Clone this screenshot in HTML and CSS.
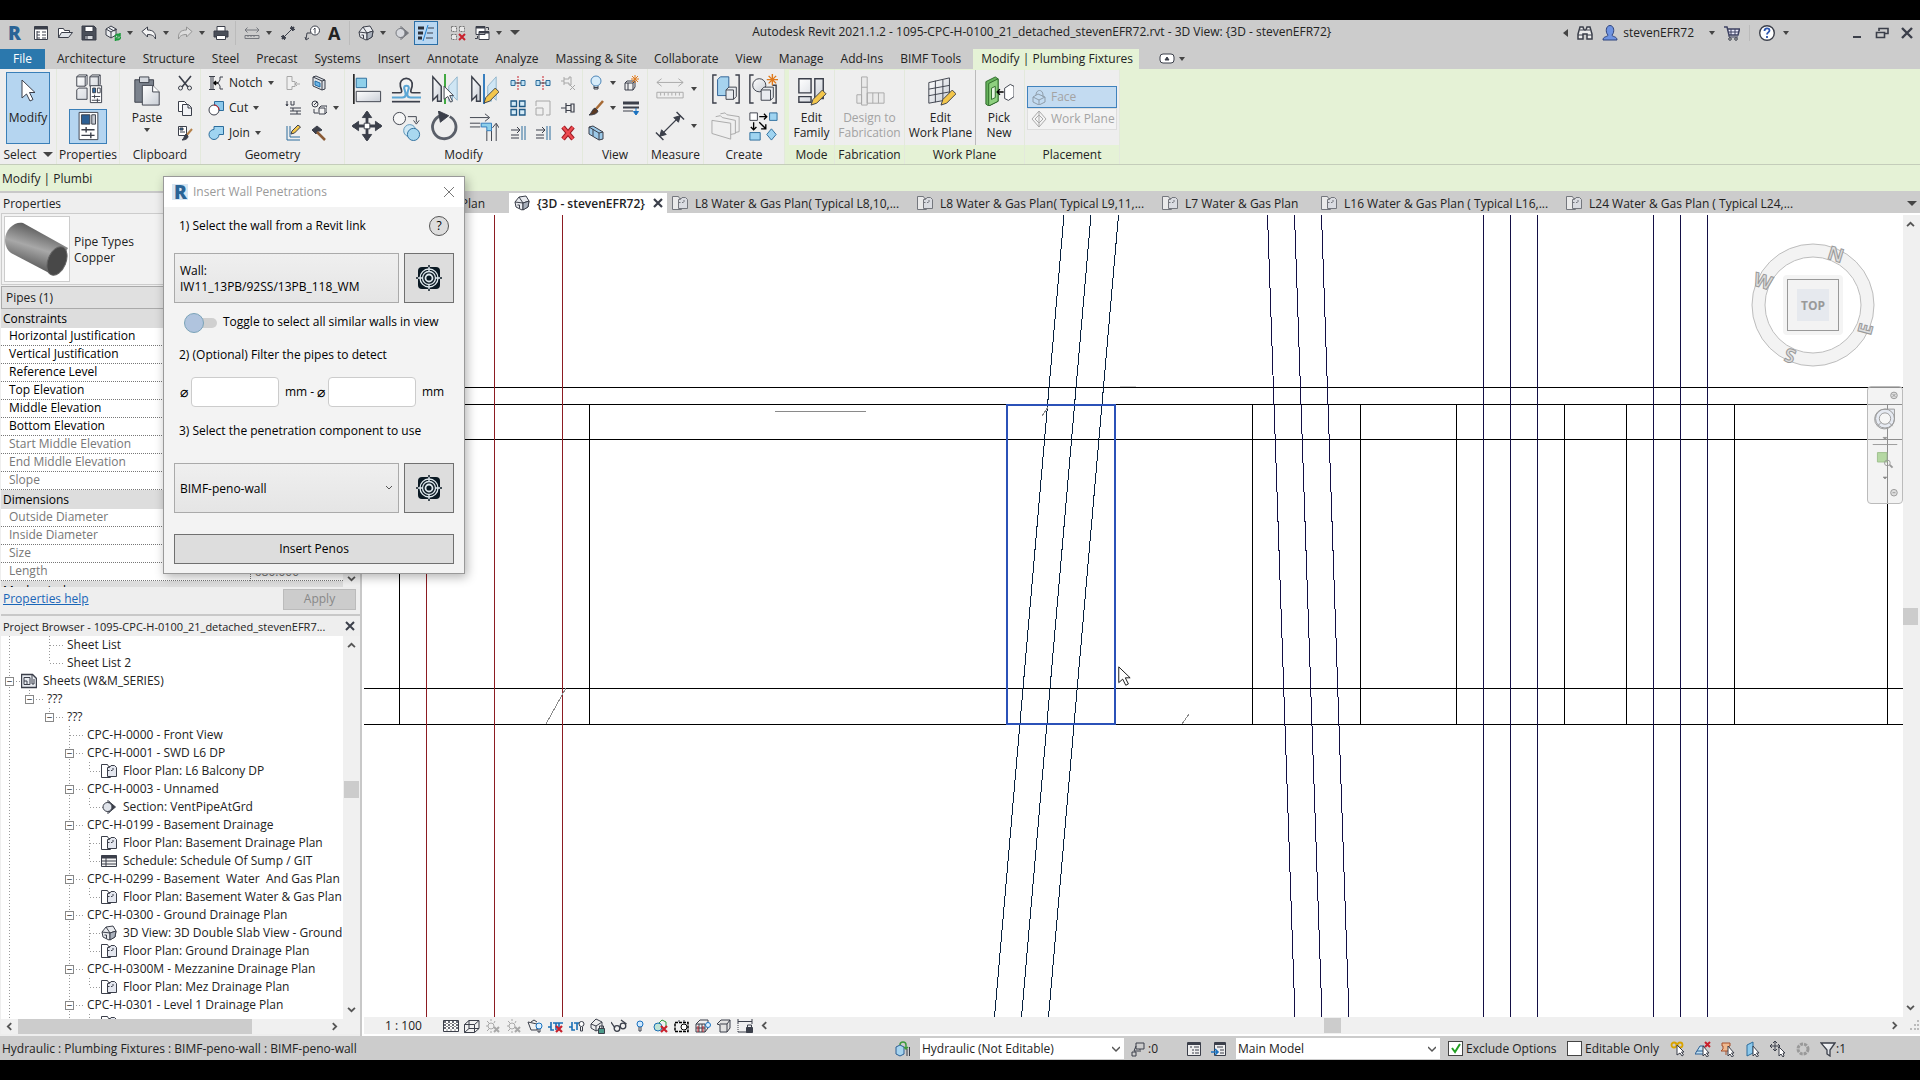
FILE: index.html
```html
<!DOCTYPE html>
<html lang="en">
<head>
  <meta charset="UTF-8">
  <meta name="viewport" content="width=device-width, initial-scale=1.0">
  <title>Autodesk Revit 2021.1.2</title>
  <link rel="stylesheet" href="styles.css">
</head>
<body>
  <!-- Icon sprite -->
  <svg class="sprite" aria-hidden="true">
    <defs>
      <linearGradient id="pipe-side" x1="0.3" y1="0" x2="0" y2="0.8">
        <stop offset="0" stop-color="#5c5c5c"/>
        <stop offset="0.45" stop-color="#a8a8a8"/>
        <stop offset="1" stop-color="#4a4a4a"/>
      </linearGradient>
      <linearGradient id="soft" x1="0" y1="0" x2="1" y2="1">
        <stop offset="0" stop-color="#fff"/>
        <stop offset="1" stop-color="#c9ced6"/>
      </linearGradient>
    </defs>
    <symbol id="logo" viewBox="0 0 16 16"><text x="2" y="15" font-family="Open Sans" font-weight="800" font-size="19" fill="#2a6496" stroke="none">R</text></symbol>
    <symbol id="panel" viewBox="0 0 16 16"><path d="M1.5 1.5h13v13h-13z" fill="#fff"/><path d="M1.5 3h13" stroke-width="3"/><path d="M4 6v8M4 7h3M4 10h3M4 13h3M9 7h4M9 10h4M9 13h4"/></symbol>
    <symbol id="open" viewBox="0 0 16 16"><path d="M1.5 12.5v-9h5l1 2h5v2" fill="#fff"/><path d="M1.5 12.5l3-5h11l-4 5z" fill="#dfe3e8"/></symbol>
    <symbol id="save" viewBox="0 0 16 16"><path d="M1 1h12l2 2v12H1z" fill="#4a4f59"/><path d="M4 1.5h8v5H4z" fill="#fff"/><path d="M4 10.5h8v4H4z" fill="#d7dade"/><path d="M6 11v3"/></symbol>
    <symbol id="sync" viewBox="0 0 16 16"><path d="M1 4l5-3 5 3v6l-5 3-5-3z" fill="#e9ebee"/><path d="M1 4l5 3 5-3M6 7v6M4 3l5 3 3-2" /><path d="M10 12a3 3 0 0 1 5-2m0-2v3h-3M15.5 12a3 3 0 0 1-5 2m0 2v-3h3" stroke="#1c9a3c" stroke-width="1.5"/></symbol>
    <symbol id="undo" viewBox="0 0 16 16"><path d="M1 6.5L6.5 2v3c6 0 8.5 3 8 9-1.5-3.5-4-4.5-8-4.5v2.5z" fill="#f4f4f4"/></symbol>
    <symbol id="print" viewBox="0 0 16 16"><path d="M4 6V1.5h8V6" fill="#fff"/><path d="M1 6h14v6H1z" fill="#4a4f59"/><path d="M3.5 10.5h9v4h-9z" fill="#fff"/></symbol>
    <symbol id="ruler" viewBox="0 0 16 16"><path d="M1 5h14M3.5 2.5L1 5l2.5 2.5M12.5 2.5L15 5l-2.5 2.5M1 10.5h14v3H1zM4 10.5v1.5M7 10.5v1.5M10 10.5v1.5"/></symbol>
    <symbol id="dim" viewBox="0 0 16 16"><path d="M3 13L13 3M1 11l4 4M11 1l4 4"/><path d="M2 14l1-4 3 3zM14 2l-1 4-3-3z" fill="#3b3f4a"/></symbol>
    <symbol id="tag" viewBox="0 0 16 16"><circle cx="11" cy="5.5" r="4.5" fill="#fff"/><path d="M9.5 4.5l1.5-1.500v5.500"/><path d="M7 8H3l-1 6M1 12l1 3 3-2"/></symbol>
    <symbol id="house" viewBox="0 0 16 16"><path d="M1 7l4-5 7-1 3 5-1 6-6 3-6-3z" fill="#e8eaee"/><path d="M5 2l4 6v7M1 7l8 1 6-2" /><path d="M9 8l6-2-1 6-5 3z" fill="#a9b0bb"/><path d="M3.5 10h2v3.5" /></symbol>
    <symbol id="section" viewBox="0 0 16 16"><path d="M8 2.500l6.500 5.500L8 13.500z" fill="#3b3f4a"/><circle cx="6.500" cy="8" r="4.500" fill="#dfe3ea"/><path d="M7 1v3M7 12v3"/></symbol>
    <symbol id="thin" viewBox="0 0 16 16"><path d="M0 3h6M0 8h5M0 13h4" stroke="#2b2f38" stroke-width="3"/><path d="M10 3h6M9 8h6M8 13h7" stroke="#3b3f4a"/><path d="M10 0L5 16" stroke="#1d7fd1"/></symbol>
    <symbol id="hidden" viewBox="0 0 16 16"><path d="M1.5 1.5h5v5h-5zM9.5 1.5h5v5h-5zM1.5 9.5h5v5h-5z" fill="#e8e8e8" stroke="#777" stroke-dasharray="2 1"/><path d="M9 9l6 6M15 9l-6 6" stroke="#c8202c" stroke-width="2"/></symbol>
    <symbol id="windows" viewBox="0 0 16 16"><path d="M2 1.5h9v8H2zM5 6.5h10v8H5z" fill="#fff"/><path d="M2 2.5h9M5 7.5h10" stroke-width="2"/><path d="M12 2.5h2.5V5M3.5 11v2.5H1"/></symbol>
    <symbol id="binoc" viewBox="0 0 16 16"><path d="M1 14V9l2-7h3l1 3h2l1-3h3l2 7v5h-5V9H6v5z" fill="#eee" stroke-width="1.5"/><path d="M1 10h5M10 10h5M3 5h3M10 5h3"/></symbol>
    <symbol id="user" viewBox="0 0 16 16"><path d="M1 15c0-4 5-3 5-5-3-3-2-9.5 2-9.5s5 6.5 2 9.5c0 2 5 1 5 5z" fill="#6f93e0" stroke="#2d427c"/></symbol>
    <symbol id="cart" viewBox="0 0 16 16"><path d="M0 2h3l2 8h9l1.5-6H4" fill="#eef" stroke="#3c4060" stroke-width="1.5"/><path d="M5 7h10M7 4v6M11 4v6M5 10v2h9" stroke="#3c4060"/><circle cx="6" cy="14" r="1.3"/><circle cx="12" cy="14" r="1.3"/></symbol>
    <symbol id="help" viewBox="0 0 16 16"><circle cx="8" cy="8" r="7.3" fill="#fff" stroke-width="1.4"/><path d="M5.500 6c0-3.500 5-3.500 5-.5 0 2-2.500 1.800-2.500 4M8 11v2" stroke="#2c56b0" stroke-width="1.800"/></symbol>

    <symbol id="arrow" viewBox="0 0 16 24"><path d="M2 1v18l4.5-4 3.5 7 3-1.5-3.5-7H15z" fill="#fff"/></symbol>
    <symbol id="types" viewBox="0 0 32 32"><path d="M4 3l2-2h9v10l-2 2H4zM18 3l2-2h9v10l-2 2h-9zM4 17l2-2h9v12H4z" fill="url(#soft)"/><path d="M4 3h9v10M13 3l2-2M18 3h9v10M27 3l2-2"/><path d="M18.5 12.5h12v18h-12z" fill="#fff"/><path d="M21 15h3v5h-3z" fill="#2f6fa8"/><path d="M26 15h3v5h-3zM20 24h9M20 28h9M23 22v4M26 26v4"/></symbol>
    <symbol id="props" viewBox="0 0 32 32"><path d="M6.5 1.5h20v29h-20z" fill="#fff"/><path d="M9 4h9v10H9z" fill="#2c5f94"/><path d="M20 4h4v10h-4z" fill="#c5cad2"/><path d="M9 20h14M9 26h14M14 17v6M19 23v6" stroke-width="1.5"/></symbol>
    <symbol id="paste" viewBox="0 0 32 32"><path d="M3 4h20v24H3z" fill="#7b828d"/><path d="M8 1h10v6H8z" fill="#d4d8de"/><path d="M11 10h11l7 7v14H11z" fill="url(#soft)"/><path d="M22 10v7h7" fill="#fff"/></symbol>
    <symbol id="scissors" viewBox="0 0 16 16"><path d="M2 1l9 11M14 1L5 12" stroke-width="1.6"/><circle cx="3.5" cy="13" r="2"/><circle cx="12.5" cy="13" r="2"/></symbol>
    <symbol id="copy" viewBox="0 0 16 16"><path d="M1.5 1.5h6l2 2v8h-8z" fill="#fff"/><path d="M5.5 4.5h6l3 3v8h-9z" fill="#f1f2f5"/><path d="M11 5v3h3"/></symbol>
    <symbol id="match" viewBox="0 0 16 16"><path d="M1.5 1.5h8v9h-8z" fill="#fff"/><path d="M3 3h3v2H3z" fill="#2f6fa8"/><path d="M3 7h5"/><path d="M15 4l-6 7" stroke="#b5814a" stroke-width="2"/><path d="M9 9l2 2c0 3-3 4-6 4 2-1 2-4 4-6z" fill="#3b3f4a"/></symbol>
    <symbol id="notch" viewBox="0 0 16 16"><path d="M1 1.5h6M1 14.5h6M3 1.5v13M5 1.5v13M15 2h-3v3l-2 3 2 3v3h3"/><path d="M10 8H6M8 6L6 8l2 2" stroke="#000" stroke-width="1.5"/></symbol>
    <symbol id="cut" viewBox="0 0 16 16"><path d="M6.5 1.5h9v9h-9z" fill="#8cc9ec" stroke="#2c6d9c"/><circle cx="6" cy="10" r="5" fill="#fff"/><path d="M6 5a5 5 0 0 1 5 5" stroke="#c8202c"/></symbol>
    <symbol id="join" viewBox="0 0 16 16"><path d="M6 1.5h9.5v8H11a5 5 0 1 1-5-5z" fill="#9fd4f1" stroke="#2c6d9c"/></symbol>
    <symbol id="cope" viewBox="0 0 16 16"><path d="M2 1.5h5v5h3v5H7v3H2z" fill="#f3f3f3"/><path d="M15 9h-5M12 7l-2 2 2 2"/></symbol>
    <symbol id="wallopen" viewBox="0 0 16 16"><path d="M2 2l3-1 9 4v9l-3 1-9-4z" fill="#dfe3e8"/><path d="M2 2l9 4v9M11 6l3-1"/><path d="M4 6l5 2v4l-5-2z" fill="#6db5e6" stroke="#1f6ea8"/></symbol>
    <symbol id="beam" viewBox="0 0 16 16"><path d="M2 1v5M1 4l1 2 1-2M6 1v4h3V1M5 8h11M5 11h11M8 8v3M12 11v3M5 14h11"/></symbol>
    <symbol id="split" viewBox="0 0 16 16"><circle cx="4" cy="4" r="3"/><path d="M3 5l3-3M3 9v4h4M8 8h6v6H8zM8 8l2-2h6v6l-2 2" fill="#f3f3f3"/></symbol>
    <symbol id="wallpen" viewBox="0 0 16 16"><path d="M2 1v14h13M5 1v11h10" stroke="#2c6d9c"/><path d="M6 9l1-3 6-6 2.5 2-6 6z" fill="#f3c64b"/></symbol>
    <symbol id="hammer" viewBox="0 0 16 16"><path d="M1 5l5-4 5 4-2 1-2 0-2 3z" fill="#3b3f4a"/><path d="M6 7l8 8" stroke="#8a5a35" stroke-width="2.5"/></symbol>

    <symbol id="align" viewBox="0 0 32 32"><path d="M2 0v32" stroke="#000" stroke-width="1.5"/><path d="M4.5 4.5h11v10h-11z" fill="#8fd0ea" stroke="#2c6d9c"/><path d="M4.5 18.5h26v11h-26z" fill="url(#soft)"/></symbol>
    <symbol id="offset" viewBox="0 0 32 32"><path d="M1 20h8c4 0 2-3 1-7a6.500 6.500 0 1 1 12.500 0c-1 4-3 7 1 7h8" fill="#f4f4f4" stroke-width="1.800"/><path d="M1 25h11c5 0 4-4 2-10a2.500 2.500 0 1 1 5 0c-2 6-3 10 2 10h11" stroke="#5ba7d6" stroke-width="2.200"/><path d="M1 29.500h30" stroke-width="1.800"/></symbol>
    <symbol id="mirrorpick" viewBox="0 0 32 32"><path d="M3 3l9 10v16H8v-6l-5 5z" fill="url(#soft)" stroke-width="1.500"/><path d="M29 3l-9 10v16h4v-6l5 5z" fill="#cfe6f4" stroke="#8fb4cc"/><path d="M16 0v32" stroke="#36a536" stroke-width="2"/><path d="M15 13v14l4-3 3 6 2-1-3-6h4z" fill="#fff"/></symbol>
    <symbol id="mirrordraw" viewBox="0 0 32 32"><path d="M3 3l9 10v16H8v-6l-5 5z" fill="url(#soft)" stroke-width="1.500"/><path d="M29 3l-9 10v16h4v-6l5 5z" fill="#cfe6f4" stroke="#8fb4cc"/><path d="M16 0v32" stroke="#2c78bc" stroke-width="2"/><path d="M16 31l2-6 10-10 4 4-10 10z" fill="#f3c64b"/></symbol>
    <symbol id="move" viewBox="0 0 32 32"><path d="M16 1v30M1 16h30" stroke-width="3"/><path d="M16 0l5 7H11zM16 32l-5-7h10zM0 16l7-5v10zM32 16l-7 5V11z" fill="#3b3f4a"/><path d="M13 13h6v6h-6z" fill="#fff"/></symbol>
    <symbol id="copyel" viewBox="0 0 32 32"><circle cx="9" cy="8" r="6.5" fill="#f6f6f6"/><circle cx="20" cy="21" r="6.5" fill="#cfe8f5" stroke="#5b93b8"/><circle cx="24" cy="25" r="6.5" fill="#a9d8f0" stroke="#2c6d9c"/><path d="M18 6h9v6M24 10l3 4 3-4"/></symbol>
    <symbol id="rotate" viewBox="0 0 32 32"><path d="M21 6a12.500 12.500 0 1 1-9-1" stroke="#5a5f69" stroke-width="3"/><path d="M9 0l11 5-9 7z" fill="#3b3f4a"/></symbol>
    <symbol id="trim" viewBox="0 0 32 32"><path d="M1 7h20M17 3l5 4-5 4M29 32V14M25 18l4-5 3 5"/><path d="M1 13h11M1 17h11M19 32V21M24 32V21"/><path d="M13 13h11v8h-5v-4h-6z" fill="#8fd0ea" stroke="#2c78bc"/></symbol>
    <symbol id="spliteye" viewBox="0 0 16 16"><path d="M1 5.5h4v5H1zM11 5.5h4v5h-4z" stroke="#2c6d9c" fill="#bfe0f2"/><path d="M8 1v14" stroke="#c8202c" stroke-dasharray="2 1"/><path d="M5 8h6"/></symbol>
    <symbol id="unpin" viewBox="0 0 16 16"><path d="M1 6h3M4 2v8M4 4h5V2h2v8H9V8H4"/><path d="M10 10l5 5M15 10l-5 5"/></symbol>
    <symbol id="array" viewBox="0 0 16 16"><path d="M1 1h5.5v5.5H1zM9.5 1H15v5.5H9.5zM1 9.5h5.5V15H1zM9.5 9.5H15V15H9.5z" fill="#d5ebf7" stroke="#1f5a86" stroke-width="1.3"/></symbol>
    <symbol id="scale" viewBox="0 0 16 16"><path d="M1 1h14v14h-4M1 1v5M1 8h7v7H1z" fill="#f1f1f1"/></symbol>
    <symbol id="pin" viewBox="0 0 16 16"><path d="M1 8h5M6 3v10M6 5.5h5M6 10.5h5M11 4h3v8h-3z" stroke-width="1.2"/></symbol>
    <symbol id="extend" viewBox="0 0 16 16"><path d="M1 5h9M7 2l3 3-3 3M1 10h8M1 13h8"/><path d="M12 1v14M15 1v14" stroke="#2c6d9c"/></symbol>
    <symbol id="delete" viewBox="0 0 16 16"><path d="M3 2l10 12M13 2L3 14" stroke="#9c1c24" stroke-width="4.5"/><path d="M3 2l10 12M13 2L3 14" stroke="#ee4a50" stroke-width="2.5"/></symbol>
    <symbol id="bulb" viewBox="0 0 16 16"><circle cx="8" cy="6" r="5" fill="#d7ecfa" stroke="#4d86b8"/><path d="M6 11v3h4v-3M6 12.5h4"/></symbol>
    <symbol id="boxstar" viewBox="0 0 16 16"><path d="M2 8l2-2h8v6l-2 3H2zM2 8h8v7M10 8l2-2M5 8v7" fill="#eee"/><path d="M12 0v8M8 4h8M9 1l6 6M15 1L9 7" stroke="#e07a1c"/></symbol>
    <symbol id="brush" viewBox="0 0 16 16"><path d="M15 1L8 9" stroke="#a66a35" stroke-width="2.5"/><path d="M7 8l3 3c-1 3-5 4-9 4 3-2 3-6 6-7z" fill="#5b3a22"/></symbol>
    <symbol id="lines" viewBox="0 0 16 16"><path d="M0 3h16" stroke-width="3"/><path d="M0 7.5h16" stroke-width="2"/><path d="M0 11h10"/><path d="M13 8v6M10.5 11.5L13 15l2.5-3.5z" stroke="#1a72c0" fill="#1a72c0"/></symbol>
    <symbol id="cropbox" viewBox="0 0 16 16"><path d="M1 2l4-1 10 6v7l-4 1L1 9z" fill="#9cc9e8"/><path d="M1 2l10 6v7M11 8l4-1M5 4v7" /></symbol>
    <symbol id="rulerbig" viewBox="0 0 32 32"><path d="M2 9h28M7 5L2 9l5 4M25 5l5 4-5 4M2 19.5h28v6H2zM6 20v3M10 20v3M14 20v3M18 20v3M22 20v3M26 20v3"/></symbol>
    <symbol id="dimbig" viewBox="0 0 32 32"><path d="M6 26L26 6M1 23l8 8M23 1l8 8" stroke-width="1.500"/><path d="M5 27l2-7 5 5zM27 5l-2 7-5-5z" fill="#3b3f4a"/></symbol>
    <symbol id="group" viewBox="0 0 32 32"><path d="M6 1H2v30h4M26 1h4v30h-4" stroke-width="1.5"/><path d="M7 6l3-3h9v20h-3l-9 0z" fill="#a6d3ee" stroke="#2c5f94"/><path d="M16 17l3-3h8v10l-3 3h-8z" fill="#e8ebef"/><path d="M16 17h8v10"/></symbol>
    <symbol id="similar" viewBox="0 0 32 32"><path d="M6 1H2v30h4M26 12h4v19h-4" stroke-width="1.5"/><circle cx="12" cy="12" r="7" fill="url(#soft)"/><path d="M14 17l3-3h10v11l-3 3H14z" fill="#e8ebef"/><path d="M14 17h10v11"/><path d="M26 0v12M20 6h12M22 2l8 8M30 2l-8 8" stroke="#e07a1c" stroke-width="1.5"/></symbol>
    <symbol id="folders" viewBox="0 0 32 32"><path d="M1 10l20 3v17L1 24zM5 6l5-1 2 2 14 3v14l-5 1M10 3l5-1 2 2 13 2v16l-4 1" fill="#f1f1f1"/></symbol>
    <symbol id="convert" viewBox="0 0 32 32"><path d="M2 2h8v8H2z" fill="#fff"/><path d="M23 2h8v8h-8zM2 23h11v8H2zM25 19l5 6-5 6-5-6z" fill="#9fd4f1" stroke="#2c6d9c"/><path d="M12 6h8M17 3l3 3-3 3M6 12v8M3 17l3 3 3-3M12 12l7 7M19 14v5h-5" stroke="#000" stroke-width="1.4"/></symbol>
    <symbol id="editfam" viewBox="0 0 32 32"><path d="M2 3h13v15H2zM19 3h9v21h-9zM2 22h13v6H2z" fill="url(#soft)" stroke-width="1.5"/><path d="M15 31l2-6 10-10 4 4-10 10z" fill="#f3c64b"/></symbol>
    <symbol id="fab" viewBox="0 0 32 32"><path d="M7 1h6v30H7zM13 18h18v11H13zM2 20h5v9H2zM19 18v11M25 18v11M7 12h6" fill="#e6e6e6"/></symbol>
    <symbol id="workplane" viewBox="0 0 32 32"><path d="M3 7l22-5v23L3 29z" fill="url(#soft)"/><path d="M3 14l22-4M3 21l22-4M10 5v23M18 4v23"/><path d="M16 31l2-6 10-10 4 4-10 10z" fill="#f3c64b"/></symbol>
    <symbol id="picknew" viewBox="0 0 32 32"><path d="M2 6L12 1l3 2v24L5 32l-3-2z" fill="#67b25c" stroke="#2d6a2a"/><path d="M5 8l10-5v24L5 32z" fill="#8ed07f" stroke="#2d6a2a"/><path d="M8 13l4-2v12l-4 2z" fill="#e8f5e4" stroke="#2d6a2a"/><path d="M22 13l6-4 4 2v11l-6 4-4-2z" fill="#fff"/><path d="M21 17h-7M17 14l-3 3 3 3" stroke="#000" stroke-width="1.5"/></symbol>
    <symbol id="face" viewBox="0 0 16 16"><path d="M2 8l5-3 7 3v5l-6 3-6-3zM2 8l6 3v5M8 11l6-3M5 6c0-6 7-6 7 0v2"/></symbol>
    <symbol id="diamond" viewBox="0 0 16 16"><path d="M8 0l7 8-7 8-7-8zM8 4l4 4-4 4-4-4zM8 0v16"/></symbol>

    <symbol id="plan" viewBox="0 0 16 16"><path d="M.5 1.5h6l1 2h2v11h-9z" fill="#fff"/><path d="M6.500 4.500h2l1.500-2h3.500l2 2v9h-9z" fill="#e4e7ef"/><path d="M6.500 7.500v6M6.500 7.500h3M12 5v2.500h-2" stroke-dasharray="2 1"/></symbol>
    <symbol id="sheets" viewBox="0 0 16 16"><path d="M.5 1.5h11l4 4v9H.5z" fill="#e9ecf1" stroke-width="1.4"/><path d="M3 4.5h6v7H3zM3 8h3v3M11 2v9h2V6"/></symbol>
    <symbol id="schedule" viewBox="0 0 16 16"><path d="M.5 2.5h15v11H.5z" fill="#f4f4f4"/><path d="M.5 4h15" stroke-width="3"/><path d="M.5 8h15M.5 11h15M5 5v8"/></symbol>
    <symbol id="target" viewBox="0 0 26 26"><rect x="2" y="2" width="22" height="22" rx="4" fill="#0b1a24" stroke="none"/><path d="M13 0v26M0 13h26" stroke="#0b1a24" stroke-width="1.5"/><g stroke="#dfe9ee" stroke-width="1.3"><circle cx="13" cy="13" r="9"/><circle cx="13" cy="13" r="6.5"/><circle cx="13" cy="13" r="3.5" stroke-width="1.8"/><path d="M13 2v4M13 20v4M2 13h4M20 13h4"/></g></symbol>

    <symbol id="v-shade" viewBox="0 0 16 16"><path d="M.5 2.5h15v11H.5z" fill="#fff"/><path d="M1 4h14M1 7h14M1 10h14" stroke-dasharray="2 2" stroke-width="1.5"/><path d="M3 5.5h12M3 8.5h12M3 12h12" stroke-dasharray="2 2" stroke="#888"/></symbol>
    <symbol id="v-wire" viewBox="0 0 16 16"><path d="M.5 6.5h10v8H.5zM5 2.5h10v8H5zM.5 6.5l4.5-4M10.5 6.5l4.5-4M10.5 14.5l4.5-4M.5 14.5l4.5-4"/></symbol>
    <symbol id="v-sun" viewBox="0 0 16 16"><circle cx="6" cy="8" r="3"/><path d="M6 1v2M1 8h2M2 3l2 2M6 13v2M2 13l2-2M10 3L9 5"/><path d="M9 9l5 5M14 9l-5 5" stroke-width="2"/></symbol>
    <symbol id="v-pot" viewBox="0 0 16 16"><path d="M1 4l3 8h6V6zM4 4l3-2 3 2"/><circle cx="12" cy="8" r="3" fill="#dff1ff" stroke="#1a72c0"/><path d="M11 11v3h2v-3"/></symbol>
    <symbol id="v-cropx" viewBox="0 0 16 16"><path d="M3 4v8h3M0 9h3M5 5h10M8 5v7M11 5v7" stroke="#1a6fb5" stroke-width="1.6"/><path d="M8 8l6 6M14 8l-6 6" stroke="#c8202c" stroke-width="2.2"/></symbol>
    <symbol id="v-crop" viewBox="0 0 16 16"><path d="M3 4v8h3M0 9h3M5 5h6M8 5v7" stroke="#1a6fb5" stroke-width="1.6"/><circle cx="12.5" cy="6" r="2.5" fill="#fff"/><path d="M11.5 9v4h2V9"/></symbol>
    <symbol id="v-lock" viewBox="0 0 16 16"><path d="M1 6l5-5 6 3v6l-6 3-5-3zM1 6l5 2v5M6 8l6-4" fill="#eee"/><path d="M8.5 10.5h6v5h-6z" fill="#4d9a8a"/><path d="M9.5 10V8h4v2"/></symbol>
    <symbol id="v-glass" viewBox="0 0 16 16"><path d="M0 4l4 6M10 2l5.500 4" stroke-width="1.300"/><circle cx="6" cy="10.500" r="2.800" stroke-width="1.300"/><circle cx="12" cy="8" r="2.800" stroke-width="1.300"/></symbol>
    <symbol id="v-bulb" viewBox="0 0 16 16"><circle cx="8" cy="6" r="3" fill="#cfe9ff" stroke="#1a72c0"/><path d="M7 9v4h2V9"/></symbol>
    <symbol id="v-cubes" viewBox="0 0 16 16"><circle cx="5" cy="9" r="4" fill="#bfe3d5" stroke="#1a6fb5"/><path d="M6 5l3-3 4 2v5" stroke="#2c9a3c"/><path d="M8 8l6 6M14 8l-6 6" stroke="#c8202c" stroke-width="2.2"/></symbol>
    <symbol id="v-frame" viewBox="0 0 16 16"><path d="M1 4.5h13v9H1z" stroke="#000" stroke-width="1.5" stroke-dasharray="3 1"/><circle cx="10" cy="9" r="3" fill="#fff" stroke="#000"/><path d="M5 2v2M10 2v2"/></symbol>
    <symbol id="v-grid" viewBox="0 0 16 16"><path d="M1 6l4-4h8v8l-3 4H1zM1 6h9v8M4 6v8M7 6v8M1 10h9"/><path d="M3 8v6M8 8v6" stroke="#c8202c"/><circle cx="13" cy="7" r="2.5" fill="#dff1ff" stroke="#1a72c0"/></symbol>
    <symbol id="v-box" viewBox="0 0 16 16"><path d="M1 6l4-4h9v8l-3 4H4V7zM4 6h7v8M11 6l3-4" fill="#e2e2e2"/></symbol>
    <symbol id="v-dim" viewBox="0 0 16 16"><path d="M1 1v5M15 1v5M1 3.5h14M1 14h9" /><path d="M1 7v7" stroke-dasharray="1 1"/><path d="M9.5 9.5h6v5h-6z" fill="#3b3f4a"/><path d="M10.5 9V7h4v2"/></symbol>
    <symbol id="s-work" viewBox="0 0 16 16"><path d="M1 6l4-2 4 2v7l-4 2-4-2z" fill="#a6d3ee" stroke="#2c5f94"/><path d="M5 4c0-4 6-4 6 0v4M9 6l2 2 2-2" stroke="#3d9a3d" stroke-width="1.5"/><path d="M12 8v7M14.5 6v9"/></symbol>
    <symbol id="s-edit" viewBox="0 0 16 16"><path d="M6 2h8v6H6zM6 5l-2 5h5M2 11h4v4H2zM10 8v3"/></symbol>
    <symbol id="s-list" viewBox="0 0 16 16"><path d="M1.5 1.5h13v13h-13z" fill="#eee"/><path d="M1 3h14" stroke-width="2"/><path d="M4 6h2M8 6h5M6 9h2M9 9h4M6 12h2M9 12h4"/></symbol>
    <symbol id="s-find" viewBox="0 0 16 16"><path d="M3.5 1.5h11v13h-11z" fill="#eee"/><path d="M3 3h12" stroke-width="2"/><path d="M6 6h6M9 9h4M9 12h4"/><path d="M0 11h6M4 8l3 3-3 3" stroke="#1a72c0" stroke-width="1.6"/></symbol>
    <symbol id="s-link" viewBox="0 0 16 16"><circle cx="4" cy="4" r="2.5" stroke="#d9a300" stroke-width="1.8"/><circle cx="10" cy="4" r="2.5" stroke="#d9a300" stroke-width="1.8"/><path d="M7 4v10l3-2 2 3 1.5-1-2-3H14z" fill="#fff"/></symbol>
    <symbol id="s-under" viewBox="0 0 16 16"><path d="M0 13l5-8h4v8zM2 10h6" fill="#bfe0f2" stroke="#2c5f94"/><path d="M10 1l5 5M15 1l-5 5" stroke="#c8202c" stroke-width="2"/><path d="M8 5v10l2-2 2 3 1.5-1-2-3H14z" fill="#fff"/></symbol>
    <symbol id="s-pin" viewBox="0 0 16 16"><path d="M2 2h8v3H9v3l2 2H1l2-2V5H2zM6 10v4" fill="#f0b98f" stroke="#a5502c"/><path d="M8 5v10l2-2 2 3 1.5-1-2-3H14z" fill="#fff"/></symbol>
    <symbol id="s-face" viewBox="0 0 16 16"><path d="M2 4l6-3v11l-6 3z" fill="#8cc9ec" stroke="#2c6d9c"/><path d="M8 5v10l2-2 2 3 1.5-1-2-3H14z" fill="#fff"/></symbol>
    <symbol id="s-drag" viewBox="0 0 16 16"><path d="M5 0v10M0 5h10M3 2l2-2 2 2M3 8l2 2 2-2M2 3L0 5l2 2M8 3l2 2-2 2"/><path d="M9 6v9l2-2 2 3 1-1-1-3h2z" fill="#fff"/></symbol>
    <symbol id="s-gear" viewBox="0 0 16 16"><circle cx="8" cy="8" r="5" stroke="#999" stroke-width="3" stroke-dasharray="3 1"/></symbol>
    <symbol id="s-filter" viewBox="0 0 16 16"><path d="M1 2h14L10 9v6l-3-2V9z" fill="url(#soft)" stroke-width="1.3"/></symbol>
    <symbol id="chev" viewBox="0 0 16 16"><path d="M3 10.5l5-5 5 5" stroke="#555" stroke-width="2.6"/></symbol>
  </svg>

  <div class="app">
    <header class="titlebar">
      <div class="quick-access">
        <button class="qat" aria-label="Revit"><svg><use href="#logo"/></svg></button>
        <button class="qat spaced" aria-label="Project"><svg><use href="#panel"/></svg></button>
        <button class="qat" aria-label="Open"><svg><use href="#open"/></svg></button>
        <button class="qat" aria-label="Save"><svg><use href="#save"/></svg></button>
        <button class="qat" aria-label="Synchronize"><svg><use href="#sync"/></svg><i class="caret"></i></button>
        <button class="qat" aria-label="Undo"><svg><use href="#undo"/></svg><i class="caret"></i></button>
        <button class="qat disabled" aria-label="Redo"><svg class="flip"><use href="#undo"/></svg><i class="caret"></i></button>
        <button class="qat divided" aria-label="Print"><svg><use href="#print"/></svg></button>
        <button class="qat" aria-label="Measure"><svg class="dim"><use href="#ruler"/></svg><i class="caret"></i></button>
        <button class="qat" aria-label="Aligned Dimension"><svg><use href="#dim"/></svg></button>
        <button class="qat" aria-label="Tag"><svg><use href="#tag"/></svg></button>
        <button class="qat divided letter">A</button>
        <button class="qat" aria-label="Default 3D View"><svg><use href="#house"/></svg><i class="caret"></i></button>
        <button class="qat" aria-label="Section"><svg class="dim"><use href="#section"/></svg></button>
        <button class="qat active" aria-label="Thin Lines"><svg><use href="#thin"/></svg></button>
        <button class="qat" aria-label="Close Inactive"><svg><use href="#hidden"/></svg></button>
        <button class="qat" aria-label="Switch Windows"><svg><use href="#windows"/></svg><i class="caret"></i></button>
        <button class="qat" aria-label="Customize"><i class="caret wide"></i></button>
      </div>
      <h1 class="title">Autodesk Revit 2021.1.2 - 1095-CPC-H-0100_21_detached_stevenEFR72.rvt - 3D View: {3D - stevenEFR72}</h1>
      <div class="account">
        <i class="caret left"></i>
        <button aria-label="Search"><svg><use href="#binoc"/></svg></button>
        <button class="user"><svg><use href="#user"/></svg>stevenEFR72 <i class="caret"></i></button>
        <button class="cart" aria-label="App Store"><svg><use href="#cart"/></svg></button>
        <button class="help" aria-label="Help"><svg><use href="#help"/></svg><i class="caret"></i></button>
        <div class="window-buttons">
          <button aria-label="Minimize"><svg viewBox="0 0 14 14"><path d="M3 11h8" stroke-width="2"/></svg></button>
          <button aria-label="Restore"><svg viewBox="0 0 14 14"><path d="M4 5V2.5h9v5h-3M1.5 6.5h8v5h-8z" stroke-width="1.6"/></svg></button>
          <button aria-label="Close"><svg viewBox="0 0 14 14"><path d="M2 2l10 10M12 2L2 12" stroke-width="2.4"/></svg></button>
        </div>
      </div>
    </header>

    <nav class="tabs">
      <a class="file" href="#">File</a>
      <a href="#">Architecture</a>
      <a href="#">Structure</a>
      <a href="#">Steel</a>
      <a href="#">Precast</a>
      <a href="#">Systems</a>
      <a href="#">Insert</a>
      <a href="#">Annotate</a>
      <a href="#">Analyze</a>
      <a href="#">Massing &amp; Site</a>
      <a href="#">Collaborate</a>
      <a href="#">View</a>
      <a href="#">Manage</a>
      <a href="#">Add-Ins</a>
      <a href="#">BIMF Tools</a>
      <a class="current" href="#">Modify | Plumbing Fixtures</a>
      <button class="minimize" aria-label="Minimize ribbon"><svg viewBox="0 0 16 12"><rect x="1" y="1" width="14" height="9" rx="3" fill="#fff"/><path d="M6 7l2-3 2 3z" fill="#3b3f4a"/></svg><i class="caret"></i></button>
    </nav>

    <div class="ribbon">
      <section class="panel w-select">
        <div class="tools">
          <button class="big active"><svg class="pointer"><use href="#arrow"/></svg>Modify</button>
        </div>
        <h2>Select <i class="caret wide"></i></h2>
      </section>
      <section class="panel w-props">
        <div class="tools stack">
          <button aria-label="Type Properties"><svg class="l"><use href="#types"/></svg></button>
          <button class="active" aria-label="Properties"><svg class="l"><use href="#props"/></svg></button>
        </div>
        <h2>Properties</h2>
      </section>
      <section class="panel w-clip">
        <div class="tools clip">
          <button class="big"><svg class="l"><use href="#paste"/></svg>Paste<i class="caret"></i></button>
          <div class="small-col">
            <button aria-label="Cut"><svg><use href="#scissors"/></svg></button>
            <button aria-label="Copy"><svg><use href="#copy"/></svg></button>
            <button aria-label="Match Type"><svg><use href="#match"/></svg></button>
          </div>
        </div>
        <h2>Clipboard</h2>
      </section>
      <section class="panel w-geom">
        <div class="tools geom">
          <button class="text"><svg><use href="#notch"/></svg>Notch <i class="caret"></i></button>
          <button class="disabled" aria-label="Cope"><svg><use href="#cope"/></svg></button>
          <button aria-label="Wall Opening"><svg><use href="#wallopen"/></svg></button>
          <button class="text"><svg><use href="#cut"/></svg>Cut <i class="caret"></i></button>
          <button aria-label="Beam Joins"><svg><use href="#beam"/></svg></button>
          <button aria-label="Split Face"><svg><use href="#split"/></svg><i class="caret"></i></button>
          <button class="text"><svg><use href="#join"/></svg>Join <i class="caret"></i></button>
          <button aria-label="Wall Joins"><svg><use href="#wallpen"/></svg></button>
          <button aria-label="Demolish"><svg><use href="#hammer"/></svg></button>
        </div>
        <h2>Geometry</h2>
      </section>
      <section class="panel w-modify">
        <div class="tools modify">
          <div class="large-grid">
            <button aria-label="Align"><svg class="l"><use href="#align"/></svg></button>
            <button aria-label="Offset"><svg class="l"><use href="#offset"/></svg></button>
            <button aria-label="Mirror Pick"><svg class="l"><use href="#mirrorpick"/></svg></button>
            <button aria-label="Mirror Draw"><svg class="l"><use href="#mirrordraw"/></svg></button>
            <button aria-label="Move"><svg class="l"><use href="#move"/></svg></button>
            <button aria-label="Copy"><svg class="l"><use href="#copyel"/></svg></button>
            <button aria-label="Rotate"><svg class="l"><use href="#rotate"/></svg></button>
            <button aria-label="Trim"><svg class="l"><use href="#trim"/></svg></button>
          </div>
          <div class="small-grid">
            <button aria-label="Split"><svg><use href="#spliteye"/></svg></button>
            <button aria-label="Split with Gap"><svg><use href="#spliteye"/></svg></button>
            <button class="disabled" aria-label="Unpin"><svg><use href="#unpin"/></svg></button>
            <button aria-label="Array"><svg><use href="#array"/></svg></button>
            <button class="disabled" aria-label="Scale"><svg><use href="#scale"/></svg></button>
            <button aria-label="Pin"><svg><use href="#pin"/></svg></button>
            <button aria-label="Trim Single"><svg><use href="#extend"/></svg></button>
            <button aria-label="Trim Multiple"><svg><use href="#extend"/></svg></button>
            <button aria-label="Delete"><svg><use href="#delete"/></svg></button>
          </div>
        </div>
        <h2>Modify</h2>
      </section>
      <section class="panel w-view">
        <div class="tools viewtools">
          <button aria-label="Hide"><svg><use href="#bulb"/></svg><i class="caret"></i></button>
          <button aria-label="Displace"><svg><use href="#boxstar"/></svg></button>
          <button aria-label="Override"><svg><use href="#brush"/></svg><i class="caret"></i></button>
          <button aria-label="Linework"><svg><use href="#lines"/></svg></button>
          <button aria-label="Selection Box"><svg><use href="#cropbox"/></svg></button>
        </div>
        <h2>View</h2>
      </section>
      <section class="panel w-measure">
        <div class="tools stack measure">
          <button class="disabled" aria-label="Measure"><svg class="l"><use href="#rulerbig"/></svg><i class="caret"></i></button>
          <button aria-label="Dimension"><svg class="l"><use href="#dimbig"/></svg><i class="caret"></i></button>
        </div>
        <h2>Measure</h2>
      </section>
      <section class="panel w-create">
        <div class="tools create">
          <button aria-label="Create Group"><svg class="l"><use href="#group"/></svg></button>
          <button aria-label="Create Similar"><svg class="l"><use href="#similar"/></svg></button>
          <button class="disabled" aria-label="Assembly"><svg class="l"><use href="#folders"/></svg></button>
          <button aria-label="Parts"><svg class="l"><use href="#convert"/></svg></button>
        </div>
        <h2>Create</h2>
      </section>
      <section class="panel context w-mode">
        <div class="tools"><button class="big"><svg class="l"><use href="#editfam"/></svg>Edit<br>Family</button></div>
        <h2>Mode</h2>
      </section>
      <section class="panel context w-fab">
        <div class="tools"><button class="big disabled"><svg class="l"><use href="#fab"/></svg>Design to<br>Fabrication</button></div>
        <h2>Fabrication</h2>
      </section>
      <section class="panel context w-work">
        <div class="tools">
          <button class="big wide"><svg class="l"><use href="#workplane"/></svg>Edit<br>Work Plane</button>
          <button class="big picknew"><svg class="l"><use href="#picknew"/></svg>Pick<br>New</button>
        </div>
        <h2>Work Plane</h2>
      </section>
      <section class="panel context w-place">
        <div class="tools place">
          <button class="disabled chosen"><svg><use href="#face"/></svg>Face</button>
          <button class="disabled"><svg><use href="#diamond"/></svg>Work Plane</button>
        </div>
        <h2>Placement</h2>
      </section>
    </div>

    <div class="options-bar"><span>Modify | Plumbing</span></div>

    <div class="workspace">
      <aside class="sidebar">
        <section class="properties">
          <h3>Properties</h3>
          <div class="type-selector">
            <svg class="thumb" viewBox="0 0 64 64">
              <path d="M0 23C0 12 10 4 18 6l45 25-15 27L6 36C2 33 0 28 0 23z" fill="url(#pipe-side)" stroke="none"/>
              <ellipse cx="52" cy="44" rx="9" ry="15" transform="rotate(22 52 44)" fill="#484848" stroke="#666"/>
            </svg>
            <p>Pipe Types<br>Copper</p>
          </div>
          <div class="category">Pipes (1)</div>
          <div class="grid-wrap">
            <table>
              <tr><th colspan="2">Constraints</th></tr>
              <tr><td>Horizontal Justification</td><td></td></tr>
              <tr><td>Vertical Justification</td><td></td></tr>
              <tr><td>Reference Level</td><td></td></tr>
              <tr><td>Top Elevation</td><td></td></tr>
              <tr><td>Middle Elevation</td><td></td></tr>
              <tr><td>Bottom Elevation</td><td></td></tr>
              <tr class="readonly"><td>Start Middle Elevation</td><td></td></tr>
              <tr class="readonly"><td>End Middle Elevation</td><td></td></tr>
              <tr class="readonly"><td>Slope</td><td></td></tr>
              <tr><th colspan="2">Dimensions</th></tr>
              <tr class="readonly"><td>Outside Diameter</td><td></td></tr>
              <tr class="readonly"><td>Inside Diameter</td><td></td></tr>
              <tr class="readonly"><td>Size</td><td></td></tr>
              <tr class="readonly"><td>Length</td><td>680.000</td></tr>
              <tr><th>Mechanical</th><th class="fold"><svg><use href="#chev"/></svg></th></tr>
            </table>
            <div class="vscroll"><svg class="down"><use href="#chev"/></svg></div>
          </div>
          <div class="help-row">
            <a href="#">Properties help</a>
            <button disabled>Apply</button>
          </div>
        </section>

        <section class="browser">
          <h3><span>Project Browser - 1095-CPC-H-0100_21_detached_stevenEFR7...</span>
            <button aria-label="Close"><svg viewBox="0 0 12 12"><path d="M2 2l8 8M10 2L2 10" stroke-width="2"/></svg></button></h3>
          <div class="tree-wrap">
            <ul class="tree">
              <li>
                <ul class="deep">
                  <li><div class="row">Sheet List</div></li>
                  <li><div class="row">Sheet List 2</div></li>
                </ul>
              </li>
              <li class="more">
                <div class="row icon"><button>−</button><svg><use href="#sheets"/></svg>Sheets (W&amp;M_SERIES)</div>
                <ul>
                  <li>
                    <div class="row"><button>−</button>???</div>
                    <ul>
                      <li>
                        <div class="row"><button>−</button>???</div>
                        <ul>
                          <li><div class="row">CPC-H-0000 - Front View</div></li>
                          <li><div class="row"><button>−</button>CPC-H-0001 - SWD L6 DP</div>
                            <ul>
                              <li><div class="row icon"><svg><use href="#plan"/></svg>Floor Plan: L6 Balcony DP</div></li>
                            </ul>
                          </li>
                          <li><div class="row"><button>−</button>CPC-H-0003 - Unnamed</div>
                            <ul>
                              <li><div class="row icon"><svg><use href="#section"/></svg>Section: VentPipeAtGrd</div></li>
                            </ul>
                          </li>
                          <li><div class="row"><button>−</button>CPC-H-0199 - Basement Drainage</div>
                            <ul>
                              <li><div class="row icon"><svg><use href="#plan"/></svg>Floor Plan: Basement Drainage Plan</div></li>
                              <li><div class="row icon"><svg><use href="#schedule"/></svg>Schedule: Schedule Of Sump / GIT</div></li>
                            </ul>
                          </li>
                          <li><div class="row"><button>−</button>CPC-H-0299 - Basement&nbsp; Water&nbsp; And Gas Plan</div>
                            <ul>
                              <li><div class="row icon"><svg><use href="#plan"/></svg>Floor Plan: Basement Water &amp; Gas Plan</div></li>
                            </ul>
                          </li>
                          <li><div class="row"><button>−</button>CPC-H-0300 - Ground Drainage Plan</div>
                            <ul>
                              <li><div class="row icon"><svg><use href="#house"/></svg>3D View: 3D Double Slab View - Ground F</div></li>
                              <li><div class="row icon"><svg><use href="#plan"/></svg>Floor Plan: Ground Drainage Plan</div></li>
                            </ul>
                          </li>
                          <li><div class="row"><button>−</button>CPC-H-0300M - Mezzanine Drainage Plan</div>
                            <ul>
                              <li><div class="row icon"><svg><use href="#plan"/></svg>Floor Plan: Mez Drainage Plan</div></li>
                            </ul>
                          </li>
                          <li class="more"><div class="row"><button>−</button>CPC-H-0301 - Level 1 Drainage Plan</div>
                            <ul>
                              <li><div class="row icon"><svg><use href="#plan"/></svg></div></li>
                            </ul>
                          </li>
                        </ul>
                      </li>
                    </ul>
                  </li>
                </ul>
              </li>
            </ul>
            <div class="vscroll full"><svg><use href="#chev"/></svg><i class="thumb-y"></i><svg class="down"><use href="#chev"/></svg></div>
          </div>
          <div class="hscroll"><svg class="west"><use href="#chev"/></svg><i class="thumb-x"></i><svg class="east"><use href="#chev"/></svg></div>
        </section>
      </aside>

      <main class="view">
        <div class="view-tabs">
          <a class="hidden-tab" href="#">L3 Plan</a>
          <a class="current" href="#"><svg><use href="#house"/></svg>{3D - stevenEFR72}<svg class="close" viewBox="0 0 12 12"><path d="M2 2l8 8M10 2L2 10" stroke-width="2.2"/></svg></a>
          <a class="long" href="#"><svg><use href="#plan"/></svg>L8 Water &amp; Gas Plan( Typical L8,10,...</a>
          <a class="long" href="#"><svg><use href="#plan"/></svg>L8 Water &amp; Gas Plan( Typical L9,11,...</a>
          <a class="short" href="#"><svg><use href="#plan"/></svg>L7 Water &amp; Gas Plan</a>
          <a class="long" href="#"><svg><use href="#plan"/></svg>L16 Water &amp; Gas Plan ( Typical L16,...</a>
          <a class="long" href="#"><svg><use href="#plan"/></svg>L24 Water &amp; Gas Plan ( Typical L24,...</a>
          <button aria-label="More views"><i class="caret wide"></i></button>
        </div>

        <div class="canvas">
          <svg class="drawing" shape-rendering="crispEdges">
            <g stroke="#000">
              <path d="M0 172.5h1540M0 189.5h1540M0 224.5h1540M0 473.5h1540M0 509.5h1540"/>
              <path d="M35.5 189v320M225.5 189v320M888.5 189v320M996.5 189v320M1092.5 189v320M1200.5 189v320M1262.5 189v320M1370.5 189v320M1523.5 189v320"/>
            </g>
            <path stroke="#8c1c22" d="M62.5 0v802M130.5 0v802M198.5 0v802"/>
            <path stroke="#130f45" d="M1119.5 0v802M1146.5 0v802M1173.5 0v802M1289.5 0v802M1316.5 0v802M1343.5 0v802"/>
            <path stroke="#08213f" d="M700 0L630.5 802M727 0L657.5 802M754.5 0L684.5 802"/>
            <path stroke="#130f45" d="M903.5 0L931 802M930.5 0L958 802M957.5 0L985 802"/>
            <path stroke="#8a8a8a" d="M411 196.5h91M678 201l6-9M182 509l20-36M818 509l7-10"/>
            <path stroke="#ccc" d="M756 171.5h16"/>
            <path stroke="#2b51b8" stroke-width="2" d="M643 190h108v319H643z"/>
          </svg>

          <svg class="cursor"><use href="#arrow"/></svg>

          <svg class="viewcube" viewBox="0 0 132 132">
            <circle cx="66" cy="66" r="54.5" stroke="#f3f3f3" stroke-width="13"/>
            <circle cx="66" cy="66" r="61" stroke="#bdbdbd"/>
            <circle cx="66" cy="66" r="48" stroke="#bdbdbd"/>
            <rect x="36" y="36" width="60" height="60" rx="4" fill="#f4f4f4" stroke="none"/>
            <rect x="40.5" y="40.5" width="51" height="51" fill="#f3f3f3" stroke="#999"/>
            <rect x="50" y="50" width="32" height="32" fill="#e6e9ee" stroke="none"/>
            <text x="66" y="71" class="top">TOP</text>
            <text class="compass" transform="translate(89 15) rotate(17)" y="7">N</text>
            <text class="compass" transform="translate(118 90) rotate(-75)" y="7">E</text>
            <text class="compass" transform="translate(43 117) rotate(197)" y="7">S</text>
            <text class="compass" transform="translate(16 42) rotate(17)" y="7">W</text>
          </svg>

          <div class="navbar">
            <svg viewBox="0 0 36 118">
              <g stroke="#999">
                <circle cx="27.5" cy="6.5" r="3.5" fill="#ddd"/><path d="M26 5l3 3M29 5l-3 3"/>
                <path d="M18 21h10v11a10.5 10.5 0 1 1-10-11z" fill="#e6eaf2"/>
                <circle cx="18" cy="31" r="6" fill="#f6f6f6"/><circle cx="18" cy="31" r="10"/><path d="M10 39l4-4M26 39l-4-4"/>
                <path d="M5 58.5h26"/>
                <path d="M10 67h10v10H10z" fill="#b5d8a3" stroke="#9dbf8d"/>
                <circle cx="20.5" cy="78" r="3"/><path d="M23 80l3 3" stroke-width="2"/>
                <path d="M16 51h4l-2 2zM16 93h4l-2 2z" fill="#777"/>
                <circle cx="27.5" cy="109.5" r="3.5" fill="#ddd"/><path d="M26 109.5h3"/>
              </g>
            </svg>
          </div>
        </div>

        <div class="vscroll view-y"><svg><use href="#chev"/></svg><i class="thumb-y"></i><svg class="down"><use href="#chev"/></svg></div>

        <div class="view-controls">
          <button class="scale">1 : 100</button>
          <button aria-label="Detail Level"><svg><use href="#v-shade"/></svg></button>
          <button aria-label="Visual Style"><svg><use href="#v-wire"/></svg></button>
          <button class="disabled" aria-label="Sun Path"><svg><use href="#v-sun"/></svg></button>
          <button class="disabled" aria-label="Shadows"><svg><use href="#v-sun"/></svg></button>
          <button aria-label="Rendering"><svg><use href="#v-pot"/></svg></button>
          <button aria-label="Crop View"><svg><use href="#v-cropx"/></svg></button>
          <button aria-label="Show Crop Region"><svg><use href="#v-crop"/></svg></button>
          <button aria-label="Locked View"><svg><use href="#v-lock"/></svg></button>
          <button aria-label="Temporary Hide"><svg><use href="#v-glass"/></svg></button>
          <button aria-label="Reveal Hidden"><svg><use href="#v-bulb"/></svg></button>
          <button aria-label="Worksharing Display"><svg><use href="#v-cubes"/></svg></button>
          <button aria-label="Temporary View"><svg><use href="#v-frame"/></svg></button>
          <button aria-label="Analytical Model"><svg><use href="#v-grid"/></svg></button>
          <button aria-label="Displacement"><svg><use href="#v-box"/></svg></button>
          <button aria-label="Constraints"><svg><use href="#v-dim"/></svg></button>
          <svg class="west"><use href="#chev"/></svg>
          <div class="hscroll view-x"><i class="thumb-x"></i><svg class="east"><use href="#chev"/></svg></div>
          <svg class="grip" viewBox="0 0 12 12"><path d="M9 1h2M6 5h2M9 5h2M2 9h2M6 9h2M9 9h2" stroke="#bbb" stroke-width="2"/></svg>
        </div>
      </main>
    </div>

    <footer class="status">
      <span class="message">Hydraulic : Plumbing Fixtures : BIMF-peno-wall : BIMF-peno-wall</span>
      <svg><use href="#s-work"/></svg>
      <select aria-label="Workset"><option>Hydraulic (Not Editable)</option></select>
      <span class="requests"><svg><use href="#s-edit"/></svg>:0</span>
      <svg class="list"><use href="#s-list"/></svg>
      <svg class="list"><use href="#s-find"/></svg>
      <select aria-label="Design option"><option>Main Model</option></select>
      <label class="exclude"><input type="checkbox" checked>Exclude Options</label>
      <label class="editable"><input type="checkbox">Editable Only</label>
      <div class="select-tools">
        <svg><use href="#s-link"/></svg>
        <svg><use href="#s-under"/></svg>
        <svg><use href="#s-pin"/></svg>
        <svg><use href="#s-face"/></svg>
        <svg><use href="#s-drag"/></svg>
        <svg><use href="#s-gear"/></svg>
        <span><svg><use href="#s-filter"/></svg>:1</span>
      </div>
    </footer>
  </div>

  <form class="dialog">
    <header><svg class="mark"><use href="#logo"/></svg><h2>Insert Wall Penetrations</h2>
      <button type="button" aria-label="Close"><svg viewBox="0 0 12 12"><path d="M1 1l10 10M11 1L1 11"/></svg></button></header>
    <div class="dialog-body">
      <div class="step"><span>1) Select the wall from a Revit link</span><button type="button" class="question">?</button></div>
      <div class="pick">
        <button type="button" class="field">Wall:<br>IW11_13PB/92SS/13PB_118_WM</button>
        <button type="button" class="aim" aria-label="Pick wall"><svg><use href="#target"/></svg></button>
      </div>
      <label class="toggle"><input type="checkbox" role="switch">Toggle to select all similar walls in view</label>
      <p class="step-2">2) (Optional) Filter the pipes to detect</p>
      <div class="range">
        <label for="min">⌀</label><input id="min" type="text"><span class="unit">mm -</span>
        <label for="max">⌀</label><input id="max" type="text"><span class="unit">mm</span>
      </div>
      <label class="step-3" for="component">3) Select the penetration component to use</label>
      <div class="pick">
        <select id="component" class="field"><option>BIMF-peno-wall</option></select>
        <button type="button" class="aim" aria-label="Pick component"><svg><use href="#target"/></svg></button>
      </div>
      <button type="button" class="insert">Insert Penos</button>
    </div>
  </form>
</body>
</html>
```

FILE: styles.css
```css
* {
  box-sizing: border-box;
}

body {
  margin: 0;
  height: 100vh;
  padding: 20px 0;
  overflow: hidden;
  background: #000;
  color: #222;
  font: 12px/16px 'Segoe UI', 'Open Sans', sans-serif;
}

h1, h2, h3, p, ul {
  margin: 0;
  padding: 0;
  font-size: 12px;
  font-weight: 400;
  list-style: none;
}

button, input, select {
  margin: 0;
  padding: 0;
  border: 0;
  background: none;
  color: inherit;
  font: inherit;
}

button {
  display: flex;
  align-items: center;
  justify-content: center;
}

a {
  color: inherit;
  text-decoration: none;
}

svg {
  display: block;
  flex: none;
  width: 16px;
  height: 16px;
  fill: none;
  stroke: #3b3f4a;
}

symbol {
  overflow: visible;
}

svg.l {
  width: 30px;
  height: 30px;
}

.sprite {
  position: absolute;
  width: 0;
  height: 0;
}

.disabled {
  color: #a3a3a3;
}

.disabled svg {
  filter: grayscale(1);
  opacity: 0.4;
}

svg.dim {
  opacity: 0.6;
}

.flip {
  transform: scaleX(-1);
}

.caret {
  flex: none;
  border: 3px solid transparent;
  border-top: 4px solid #444;
  border-bottom: 0;
}

.caret.wide {
  border-width: 5px 5px 0;
}

.caret.left {
  border: 4px solid transparent;
  border-right: 5px solid #444;
  border-left: 0;
}

.app {
  display: flex;
  flex-direction: column;
  height: 100%;
  background: #ccc;
}

/* Title bar */
.titlebar {
  display: flex;
  align-items: center;
  height: 29px;
  padding: 0 6px 4px;
}

.quick-access {
  display: flex;
  align-items: center;
  gap: 8px;
}

.qat {
  gap: 6px;
  height: 24px;
}

.qat.spaced {
  margin-left: 3px;
}

.qat.divided {
  padding-right: 6px;
  border-right: 1px solid #bbb;
}

.qat.letter {
  padding-right: 9px;
  font-size: 18px;
  font-weight: 700;
}

.qat.active {
  margin: 0 4px 0 -4px;
  padding: 0 3px;
  background: #b9d7f1;
  border: 1px solid #2a6ea6;
}

.title {
  flex: 1;
  padding-bottom: 2px;
  text-align: center;
  white-space: nowrap;
}

.account {
  display: flex;
  align-items: center;
  gap: 9px;
}

.account .user {
  gap: 5px;
}

.account .user .caret {
  margin-left: 10px;
}

.account .help {
  gap: 8px;
  margin-right: 52px;
  padding-left: 9px;
  border-left: 1px solid #bbb;
}

.window-buttons {
  display: flex;
  gap: 11px;
}

.window-buttons svg {
  width: 14px;
  height: 14px;
}

/* Ribbon tabs */
.tabs {
  display: flex;
  height: 20px;
  line-height: 19px;
  white-space: nowrap;
}

.tabs a {
  padding: 0 8px 0 9px;
}

.tabs .file {
  width: 45px;
  margin-right: 3px;
  padding: 0;
  text-align: center;
  background: #2b78ad;
  color: #fff;
}

.tabs .current {
  margin-left: 4px;
  padding: 0 6px 0 8px;
  background: #e5f2d6;
}

.tabs .minimize {
  gap: 4px;
  margin-left: 20px;
}

.tabs .minimize svg {
  height: 12px;
}

/* Ribbon panels */
.ribbon {
  display: flex;
  height: 96px;
  background: #e5f2d6;
  border-bottom: 1px solid #c4cdba;
}

.panel {
  display: flex;
  flex-direction: column;
  padding-top: 1px;
  background: #eee;
  border-right: 1px solid #e3e9dc;
  white-space: nowrap;
}

.panel.context {
  background: none;
}

.panel.context .tools {
  background: #eee;
}

.w-select { width: 57px; }
.w-props { width: 63px; }
.w-clip { width: 81px; }
.w-geom { width: 144px; }
.w-modify { width: 238px; }
.w-view { width: 65px; }
.w-measure { width: 56px; }
.w-create { width: 81px; margin-right: 4px; }
.w-mode { width: 46px; }
.w-fab { width: 70px; }
.w-work { width: 120px; }
.w-place { width: 95px; }

.panel h2 {
  display: flex;
  align-items: center;
  justify-content: center;
  gap: 6px;
  height: 19px;
  line-height: 19px;
}

.tools {
  display: flex;
  justify-content: center;
  height: 75px;
}

.big {
  flex-direction: column;
  justify-content: flex-start;
  width: 44px;
  padding-top: 6px;
  line-height: 15px;
}

.big svg {
  margin-bottom: 4px;
}

.big .caret {
  margin-top: 3px;
}

.big.active, .stack .active {
  background: #b5d5f0;
  border: 1px solid #3a7fb8;
}

.big.active {
  height: 72px;
  margin-top: 2px;
}

.big .pointer {
  width: 16px;
  height: 24px;
  margin-bottom: 7px;
}

.w-work .wide {
  width: 68px;
}

.w-work .picknew {
  width: 48px;
  border-left: 1px solid #bbb;
}

.stack {
  display: grid;
  grid-template-rows: 1fr 1fr;
  justify-content: center;
}

.stack button {
  width: 38px;
  height: 35px;
  margin: 1px 0;
}

.stack.measure button {
  gap: 6px;
}

.clip {
  padding-right: 5px;
}

.clip .big {
  width: 50px;
  margin-right: 5px;
}

.small-col, .geom, .viewtools {
  display: grid;
  grid-template-rows: repeat(3, 1fr);
}

.geom {
  grid-template-columns: 77px 26px 36px;
  justify-content: start;
  padding-left: 7px;
}

.geom button, .viewtools button {
  justify-content: flex-start;
  gap: 6px;
}

.geom .text {
  gap: 5px;
}

.modify {
  justify-content: flex-start;
  padding-left: 2px;
}

.large-grid {
  display: grid;
  grid-template: 1fr 1fr / repeat(4, 39px);
}

.small-grid {
  display: grid;
  grid-template: repeat(3, 1fr) / repeat(3, 25px);
  padding-left: 2px;
}

.viewtools {
  grid-template-columns: 35px 20px;
}

.create {
  display: grid;
  grid-template: 1fr 1fr / 37px 37px;
}

.panel .place {
  flex-direction: column;
  align-items: stretch;
  padding: 0 2px;
}

.place button {
  justify-content: flex-start;
  gap: 4px;
  height: 22px;
  padding-left: 3px;
  background: #f3f3f3;
  border: 1px solid #ddd;
}

.place .chosen {
  background: #c3dbf1;
  border-color: #3f82bd;
}

.options-bar {
  height: 26px;
  padding: 6px 2px;
  background: #e5f2d6;
}

.options-bar span {
  display: block;
  width: 90px;
  overflow: hidden;
  white-space: nowrap;
}

/* Side panels */
.workspace {
  display: flex;
  flex: 1;
  min-height: 0;
  background: #fff;
}

.sidebar {
  display: flex;
  flex-direction: column;
  width: 362px;
  padding-left: 1px;
  border-top: 2px solid #c8c8c8;
  border-right: 2px solid #c8c8c8;
  background: #eee;
  white-space: nowrap;
}

.sidebar h3 {
  display: flex;
  justify-content: space-between;
  height: 20px;
  padding: 0 4px 0 2px;
  line-height: 21px;
}

.sidebar h3 svg {
  width: 12px;
  height: 12px;
}

.browser h3 span {
  font-size: 11px;
}

.type-selector {
  display: flex;
  align-items: center;
  gap: 4px;
  height: 72px;
  padding: 0 2px;
  border: 1px solid #ccc;
  background: #f2f2f2;
}

.type-selector p {
  padding-top: 2px;
}

.type-selector .thumb {
  width: 66px;
  height: 66px;
  border: 1px solid #ccc;
  background: #fff;
}

.category {
  height: 23px;
  margin-top: 1px;
  padding: 0 4px;
  border: 1px solid #aaa;
  background: #e0e0e0;
  line-height: 21px;
}

.grid-wrap {
  display: flex;
  height: 278px;
  overflow: hidden;
}

.grid-wrap table {
  flex: 1;
  border-collapse: separate;
  border-spacing: 0;
  table-layout: fixed;
  background: #fff;
  color: #000;
}

.grid-wrap td, .grid-wrap th {
  height: 18px;
  padding: 0 8px 1px;
  border-bottom: 1px dotted #777;
  font-weight: 400;
  line-height: 16px;
  text-align: left;
}

.grid-wrap th {
  height: 19px;
  padding: 0 2px;
  border: 0;
  background: #ddd;
  line-height: 18px;
}

.grid-wrap td + td {
  border-left: 1px dotted #777;
  padding: 0 4px;
}

.grid-wrap .fold svg {
  width: 12px;
  height: 12px;
  margin-left: auto;
}

.grid-wrap .readonly {
  color: #777;
}

.vscroll {
  display: flex;
  flex-direction: column;
  justify-content: flex-end;
  align-items: center;
  width: 17px;
  background: #f0f0f0;
}

.vscroll svg, .hscroll svg, .view-controls .west {
  width: 11px;
  height: 11px;
}

.grid-wrap .vscroll {
  padding-bottom: 3px;
}

.down { transform: rotate(180deg); }
.west { transform: rotate(-90deg); }
.east { transform: rotate(90deg); }

.help-row {
  display: flex;
  align-items: center;
  justify-content: space-between;
  height: 29px;
  padding: 0 4px 3px 2px;
  border-bottom: 2px solid #c8c8c8;
}

.help-row a {
  color: #1a66b8;
  text-decoration: underline;
}

.help-row button {
  width: 73px;
  height: 21px;
  border: 1px solid #bbb;
  background: #ccc;
  color: #888;
}

.browser {
  display: flex;
  flex: 1;
  flex-direction: column;
  min-height: 0;
  padding-bottom: 2px;
}

.tree-wrap {
  display: flex;
  flex: 1;
  min-height: 0;
}

.tree {
  flex: 1;
  min-width: 0;
  overflow: hidden;
  background: #fff;
}

.tree li {
  background: repeating-linear-gradient(#999 0 1px, transparent 1px 3px) 8px 0 / 1px 100% no-repeat;
}

/* the dotted line stops at the last child of a branch */
.tree ul > li:last-child:not(.more) {
  background-size: 1px 9px;
}

.tree ul {
  margin-left: 20px;
}

.tree .deep {
  margin-left: 40px;
}

.row {
  display: flex;
  align-items: center;
  height: 18px;
  padding-left: 26px;
  background: repeating-linear-gradient(90deg, #999 0 1px, transparent 1px 3px) 9px 9px / 14px 1px no-repeat;
}

.row.icon {
  gap: 6px;
  padding-left: 20px;
}

.row button {
  width: 9px;
  height: 9px;
  margin: 0 13px 0 -22px;
  border: 1px solid #888;
  background: #fff;
  font-size: 10px;
  line-height: 7px;
}

.row.icon button {
  margin: 0 1px 0 -16px;
}

.vscroll.full {
  justify-content: space-between;
  padding: 4px 0;
}

.thumb-y {
  width: 15px;
  height: 17px;
  background: #ccc;
}

.full .thumb-y {
  margin-bottom: 76px;
}

.hscroll {
  display: flex;
  align-items: center;
  justify-content: space-between;
  height: 15px;
  padding: 0 20px 0 3px;
  background: #f0f0f0;
}

.hscroll .thumb-x {
  width: 234px;
  height: 15px;
  margin-right: auto;
  margin-left: 3px;
  background: #ccc;
}

/* Drawing view */
.view {
  display: grid;
  flex: 1;
  grid-template: 24px 1fr 17px / 1fr 17px;
  min-width: 0;
  padding: 0 0 2px 2px;
}

.view-tabs {
  display: flex;
  grid-column: 1 / 3;
  height: 22px;
  margin-left: -2px;
  padding-top: 2px;
  background: #ccc;
  line-height: 19px;
  white-space: nowrap;
}

.view-tabs a {
  display: flex;
  align-items: center;
  gap: 7px;
  padding: 0 5px;
}

.view-tabs .hidden-tab {
  justify-content: flex-end;
  width: 147px;
  padding-right: 24px;
}

.view-tabs .current {
  width: 158px;
  background: #fff;
  font-weight: 600;
}

.view-tabs .close {
  width: 12px;
  height: 12px;
  margin-left: auto;
}

.view-tabs a:not(.current) svg {
  opacity: 0.6;
}

.view-tabs .long { width: 245px; }
.view-tabs .short { width: 159px; }

.view-tabs button {
  margin: 0 3px 0 auto;
}

.canvas {
  position: relative;
  overflow: hidden;
}

.drawing {
  width: 100%;
  height: 100%;
}

.cursor {
  position: absolute;
  left: 753px;
  top: 451px;
  width: 14px;
  height: 21px;
  stroke: #000;
}

.viewcube {
  position: absolute;
  right: 24px;
  top: 24px;
  width: 132px;
  height: 132px;
}

.viewcube text {
  font-weight: 700;
  text-anchor: middle;
}

.viewcube .top {
  font-size: 12px;
  fill: #999;
  stroke: none;
}

.viewcube .compass {
  font-size: 19px;
  fill: #ddd;
  stroke: #999;
}

.navbar {
  position: absolute;
  right: 0;
  top: 171px;
  border: 1px solid #bbb;
  border-radius: 4px;
  background: rgba(235, 235, 235, 0.6);
}

.navbar svg {
  width: 34px;
  height: 116px;
}

.view-y {
  justify-content: space-between;
  padding: 4px 3px 4px 0;
}

.view-controls {
  display: flex;
  grid-column: 1 / 3;
  align-items: center;
  gap: 5px;
  background: #f0f0f0;
}

.view-controls .scale {
  width: 74px;
  padding-left: 5px;
}

.view-controls .west {
  margin-left: 1px;
}

.view-x {
  flex: 1;
  height: 17px;
  padding: 0 3px 0 0;
}

.view-x .thumb-x {
  width: 17px;
  margin: 0 auto;
}

.view-controls .grip {
  width: 12px;
  height: 12px;
}

/* Status bar */
.status {
  display: flex;
  align-items: center;
  height: 24px;
  padding: 1px 74px 0 2px;
  white-space: nowrap;
}

.status .message {
  flex: 1;
}

.status select {
  width: 204px;
  height: 21px;
  margin: 0 8px 0 9px;
  padding: 0 2px;
  appearance: none;
  background: #fff url("data:image/svg+xml,%3Csvg xmlns='http://www.w3.org/2000/svg' width='8' height='8'%3E%3Cpath d='M0 2l4 4 4-4' fill='none' stroke='%23555' stroke-width='1.5'/%3E%3C/svg%3E") right 4px center no-repeat;
}

.requests {
  display: flex;
  gap: 2px;
  width: 56px;
  margin-left: -2px;
}

.status .list {
  margin-right: 9px;
}

.status .list + select {
  margin-left: 0;
}

.status label {
  display: flex;
  align-items: center;
  gap: 3px;
}

.status .exclude {
  width: 119px;
}

.status .editable {
  width: 103px;
}

.status input {
  width: 15px;
  height: 15px;
  appearance: none;
  border: 1px solid #444;
  background: #fff;
}

.status input:checked {
  background: #fff url("data:image/svg+xml,%3Csvg xmlns='http://www.w3.org/2000/svg' width='13' height='13'%3E%3Cpath d='M3 6l3 4 5-8' fill='none' stroke='%2322a022' stroke-width='2'/%3E%3C/svg%3E");
}

.select-tools {
  display: flex;
  gap: 9px;
}

.select-tools span {
  display: flex;
}

/* Insert Wall Penetrations dialog */
.dialog {
  position: absolute;
  left: 163px;
  top: 176px;
  width: 302px;
  border: 1px solid #999;
  background: #f3f3f3;
  color: #000;
  box-shadow: 2px 3px 10px rgba(0, 0, 0, 0.3);
}

.dialog header {
  display: flex;
  align-items: center;
  gap: 5px;
  height: 30px;
  padding: 0 9px 0 8px;
  background: #fff;
}

.dialog .mark {
  background: #d8e6f2;
}

.dialog header h2 {
  flex: 1;
  color: #999;
}

.dialog header svg:not(.mark) {
  width: 12px;
  height: 12px;
  stroke: #777;
}

.dialog-body {
  display: flex;
  flex-direction: column;
  padding: 9px 10px;
}

.step {
  display: flex;
  align-items: center;
  justify-content: space-between;
  height: 20px;
  margin-bottom: 17px;
  padding: 0 5px;
}

.question {
  width: 20px;
  height: 20px;
  border: 1px solid #555;
  border-radius: 50%;
  background: #ddd;
}

.pick {
  display: flex;
  gap: 5px;
  height: 50px;
}

.field {
  flex: 1;
  justify-content: flex-start;
  padding: 2px 5px 0;
  border: 1px solid #aaa;
  background: linear-gradient(#efefef, #e5e5e5);
  text-align: left;
}

select.field {
  appearance: none;
  background: url("data:image/svg+xml,%3Csvg xmlns='http://www.w3.org/2000/svg' width='6' height='6'%3E%3Cpath d='M0 1l3 3 3-3' fill='none' stroke='%23555'/%3E%3C/svg%3E") right 6px center no-repeat, linear-gradient(#efefef, #e5e5e5);
}

.aim {
  width: 50px;
  border: 1px solid #707070;
  background: #ddd;
}

.aim svg {
  width: 26px;
  height: 26px;
}

.toggle {
  display: flex;
  align-items: center;
  gap: 6px;
  margin: 10px 0 16px 10px;
}

.toggle input {
  display: grid;
  align-items: center;
  width: 33px;
  height: 18px;
  appearance: none;
}

.toggle input::before, .toggle input::after {
  grid-area: 1 / 1;
  content: '';
}

.toggle input::before {
  height: 10px;
  margin-left: 9px;
  border-radius: 5px;
  background: #d0d0d0;
}

.toggle input::after {
  width: 18px;
  height: 18px;
  border: 1px solid #7ba3b8;
  border-radius: 50%;
  background: #b0c4de;
}

.step-2, .step-3 {
  padding-left: 5px;
}

.range {
  display: flex;
  align-items: center;
  margin: 14px 0 16px 6px;
}

.range input {
  width: 88px;
  height: 30px;
  margin-right: 6px;
  border: 1px solid #ccc;
  border-radius: 4px;
  background: #fff;
}

.range label {
  width: 17px;
  font-size: 14px;
}

.range .unit {
  min-width: 32px;
}

.step-3 {
  margin-bottom: 24px;
}

.insert {
  height: 30px;
  margin-top: 21px;
  border: 1px solid #707070;
  background: #ddd;
}
```
